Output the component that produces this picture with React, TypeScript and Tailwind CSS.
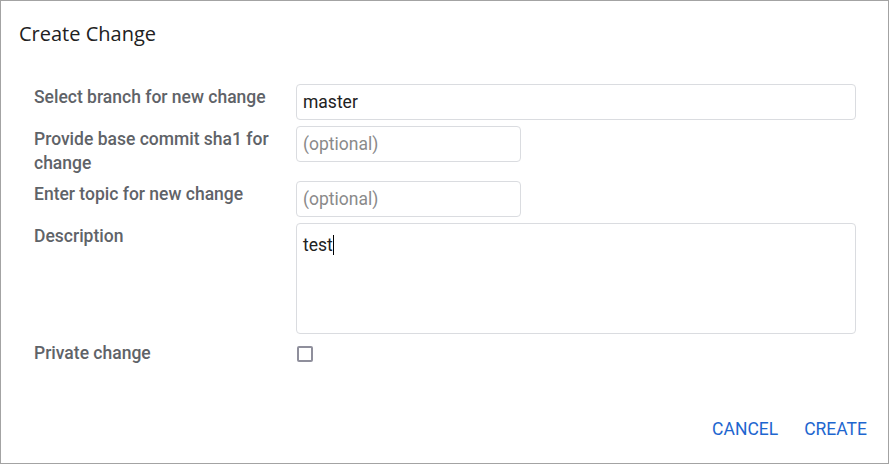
import React from 'react';

const labelCls = "pt-[1px] text-[17.5px] leading-[24px] font-medium text-[#5f6368]";
const inputCls =
  "h-[36px] rounded-[4px] border border-[#dadce0] bg-white px-[6px] text-[17.5px] text-[#212121] outline-none placeholder:text-[#8a8a8a]";

export default function App() {
  return (
    <div
      className="flex h-[464px] w-[889px] flex-col border border-[#a3a3a3] bg-white"
      style={{ fontFamily: 'Roboto, "Liberation Sans", sans-serif' }}
    >
      {/* Header */}
      <h1
        className="pl-[18px] pt-[19px] text-[20px] leading-[28px] font-normal text-[#212121]"
        style={{ fontFamily: '"Open Sans", "Noto Sans", sans-serif' }}
      >
        Create Change
      </h1>

      {/* Form */}
      <div className="mt-[36px] grid grid-cols-[250px_1fr] gap-x-[12px] gap-y-[6px] pl-[33px] pr-[32px]">
        <div className={labelCls}>Select branch for new change</div>
        <input className={`${inputCls} w-full`} defaultValue="master" />

        <div className={labelCls}>Provide base commit sha1 for change</div>
        <div>
          <input className={`${inputCls} w-[225px]`} placeholder="(optional)" />
        </div>

        <div className={labelCls}>Enter topic for new change</div>
        <div>
          <input className={`${inputCls} w-[225px]`} placeholder="(optional)" />
        </div>

        <div className={labelCls}>Description</div>
        <div className="h-[111px] w-full rounded-[4px] border border-[#dadce0] px-[6px] pt-[7px] text-[17.5px] leading-[24px] text-[#212121]">
          test
          <span className="inline-block h-[20px] w-px translate-y-[4px] bg-black" />
        </div>

        <div className={labelCls}>Private change</div>
        <div className="pt-[6px]">
          <div className="ml-px h-[16px] w-[16px] rounded-[2px] border-2 border-[#8f8f9c]" />
        </div>
      </div>

      {/* Footer */}
      <div className="mt-auto flex justify-end gap-[26px] pb-[24px] pr-[21px]">
        <button className="text-[17.5px] leading-[20px] uppercase text-[#1e66cf]">Cancel</button>
        <button className="text-[17.5px] leading-[20px] uppercase text-[#1e66cf]">Create</button>
      </div>
    </div>
  );
}
